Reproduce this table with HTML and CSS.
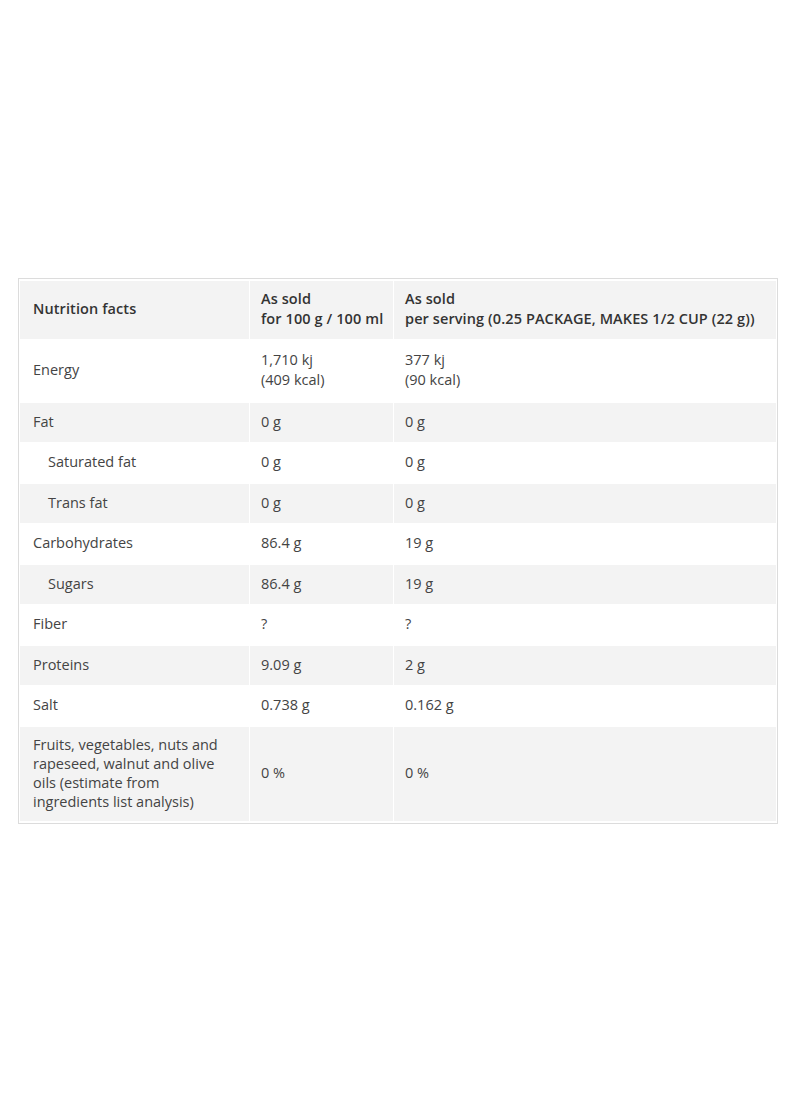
FILE: index.html
```
<!DOCTYPE html>
<html>
<head>
<meta charset="utf-8">
<link rel="stylesheet" href="styles.css">
</head>
<body>
<div class="wrap">
<table class="facts">
<colgroup><col class="c1"><col class="c2"><col class="c3"></colgroup>
<thead>
<tr class="alt"><th>Nutrition facts</th><th>As sold<br>for 100 g / 100 ml</th><th>As sold<br>per serving (0.25 PACKAGE, MAKES 1/2 CUP (22 g))</th></tr>
</thead>
<tbody>
<tr class="tall"><td>Energy</td><td>1,710 kj<br>(409 kcal)</td><td>377 kj<br>(90 kcal)</td></tr>
<tr class="alt"><td>Fat</td><td>0 g</td><td>0 g</td></tr>
<tr><td class="sub">Saturated fat</td><td>0 g</td><td>0 g</td></tr>
<tr class="alt"><td class="sub">Trans fat</td><td>0 g</td><td>0 g</td></tr>
<tr><td>Carbohydrates</td><td>86.4 g</td><td>19 g</td></tr>
<tr class="alt"><td class="sub">Sugars</td><td>86.4 g</td><td>19 g</td></tr>
<tr><td>Fiber</td><td>?</td><td>?</td></tr>
<tr class="alt"><td>Proteins</td><td>9.09 g</td><td>2 g</td></tr>
<tr><td>Salt</td><td>0.738 g</td><td>0.162 g</td></tr>
<tr class="alt long"><td>Fruits, vegetables, nuts and rapeseed, walnut and olive oils (estimate from ingredients list analysis)</td><td>0 %</td><td>0 %</td></tr>
</tbody>
</table>
</div>
</body>
</html>
```
FILE: styles.css
```
html, body {
  margin: 0;
  padding: 0;
  background: #fff;
}
body {
  font-family: "Open Sans", "Liberation Sans", sans-serif;
  font-size: 14.5px;
  color: #444;
}
.wrap {
  padding-top: 278px;
  padding-left: 18px;
  width: 760px;
}
.facts {
  width: 760px;
  border: 1px solid #dcdcdc;
  border-spacing: 1px 2px;
  border-collapse: separate;
  table-layout: fixed;
  padding: 0;
}
.c1 { width: 229px; }
.c2 { width: 143px; }
.c3 { width: auto; }
.facts th, .facts td {
  text-align: left;
  vertical-align: middle;
  line-height: 20px;
  padding: 8.5px 10px 10px 13px;
}
.facts th {
  font-weight: 600;
  color: #333;
  letter-spacing: 0.1px;
  padding-top: 8px;
  white-space: nowrap;
}
.facts tr.alt th, .facts tr.alt td { background: #f3f3f3; }
.facts tr.tall td { padding-top: 9px; padding-bottom: 11px; }
.facts tr.long td { line-height: 19.3px; padding-top: 7.5px; padding-bottom: 9px; }
.facts th:not(:first-child),
.facts td:not(:first-child) { padding-left: 11px; }
.facts td.sub { padding-left: 28px; }
```
